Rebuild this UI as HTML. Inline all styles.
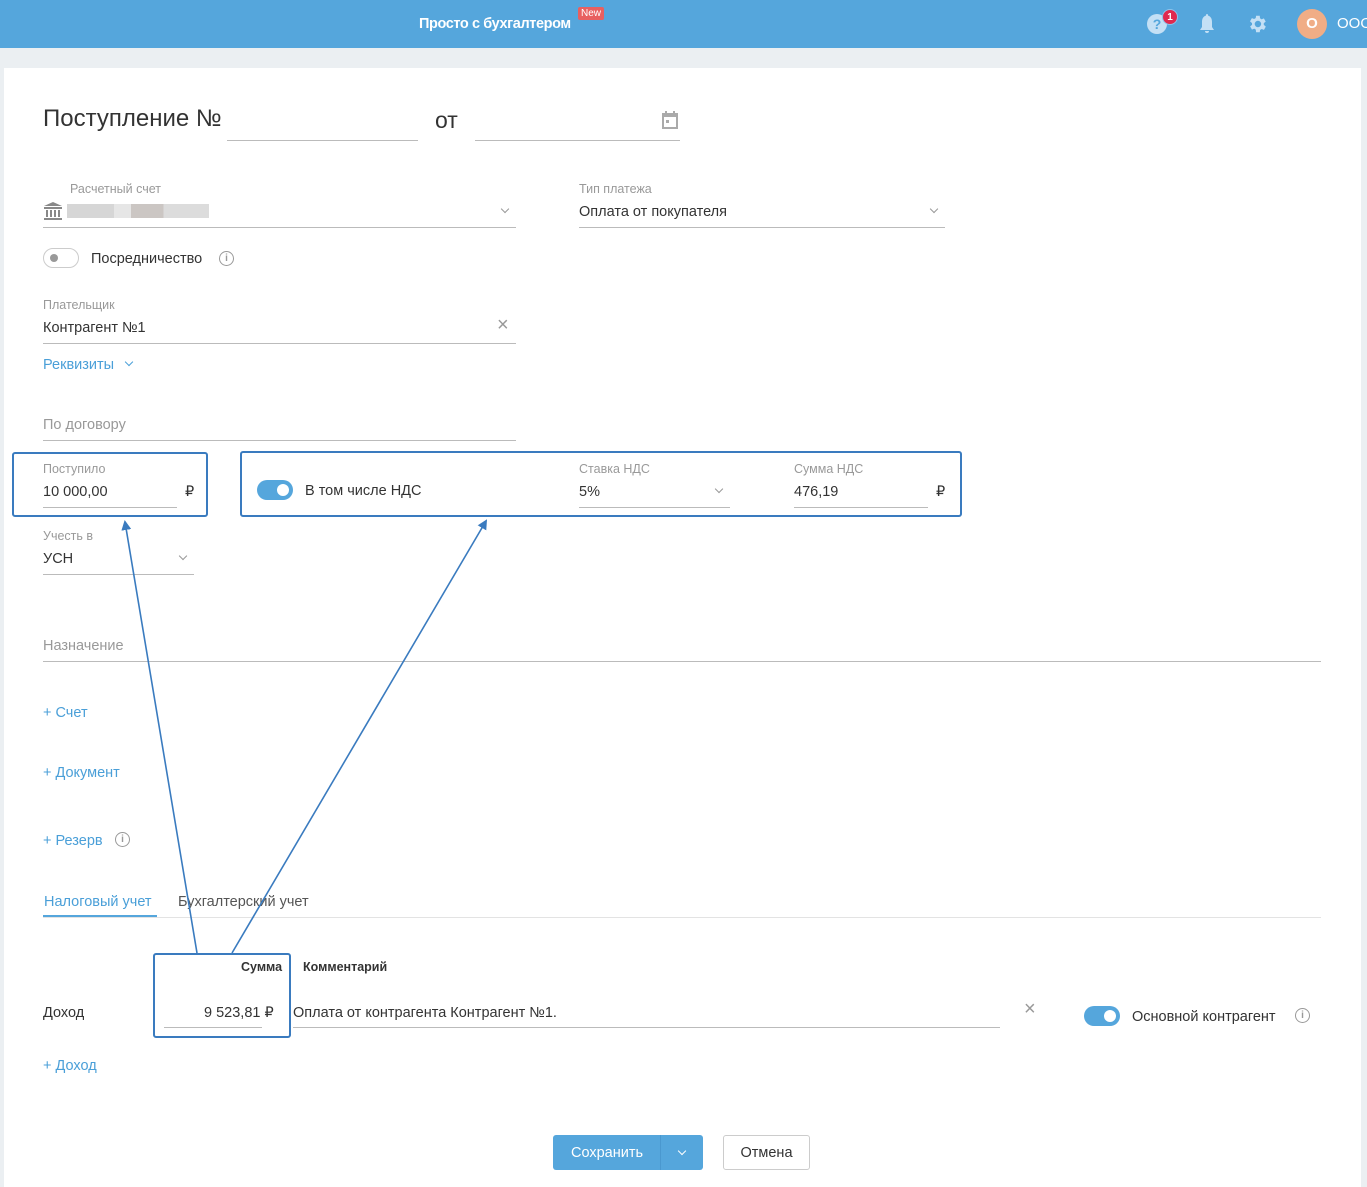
<!DOCTYPE html>
<html><head><meta charset="utf-8"><style>
*{box-sizing:border-box;margin:0;padding:0}
body{width:1367px;height:1187px;overflow:hidden;background:#ebeff2;font-family:"Liberation Sans",sans-serif;color:#333;position:relative}
.a{position:absolute;white-space:nowrap}
.top{position:absolute;left:0;top:0;width:1367px;height:48px;background:#55a6dc}
.card{position:absolute;left:4px;top:68px;width:1357px;height:1119px;background:#fff}
.lbl{font-size:12.5px;color:#999;margin-top:1px}
.val{font-size:14.5px;color:#333;margin-top:1px}
.ln{position:absolute;height:1px;background:#bbb}
.blue{color:#4a9fd8;font-size:14.5px;margin-top:1px}
.chev{position:absolute;width:6px;height:6px;border-right:1.3px solid #999;border-bottom:1.3px solid #999;transform:rotate(45deg)}
.info{position:absolute;width:15px;height:15px;border:1.3px solid #999;border-radius:50%;font-size:10px;color:#999;text-align:center;line-height:13px;font-weight:bold}
.box{position:absolute;border:2.5px solid #3a7bbf;border-radius:3px}
.tog{position:absolute;width:36px;height:20px;border-radius:10px;background:#55a6dc}
.tog:after{content:"";position:absolute;right:4px;top:4px;width:12px;height:12px;border-radius:50%;background:#fff}
</style></head><body>
<div class="top"></div>
<div class="a" style="left:419px;top:16px;color:#fff;font-size:14.5px;font-weight:bold;letter-spacing:-0.4px">Просто с бухгалтером</div>
<div class="a" style="left:578px;top:7px;background:#e86060;color:#fff;font-size:10px;padding:1px 3px;border-radius:2px">New</div>
<div class="a" style="left:1147px;top:14px;width:20px;height:20px;border-radius:50%;background:#c4e0f5;color:#55a6dc;font-weight:bold;font-size:14px;text-align:center;line-height:20px">?</div>
<div class="a" style="left:1162px;top:9px;width:16px;height:16px;border-radius:50%;background:#e0294f;color:#fff;font-size:10px;font-weight:bold;text-align:center;line-height:16px;border:1px solid #8fc3ea">1</div>
<svg class="a" style="left:1198px;top:13px" width="18" height="22" viewBox="0 0 18 22"><path d="M9 1c-1 0-1 1-1 1.5C5 3.5 4 6 4 9v5l-2 3h14l-2-3V9c0-3-1-5.5-4-6.5C10 2 10 1 9 1z M7 18a2 2 0 0 0 4 0z" fill="#c4e0f5"/></svg>
<svg class="a" style="left:1246px;top:13px" width="22" height="22" viewBox="0 0 24 24"><path fill="#c4e0f5" d="M19.4 13a7.5 7.5 0 0 0 0-2l2.1-1.6-2-3.5-2.5 1a7 7 0 0 0-1.7-1L15 3h-4l-.4 2.6a7 7 0 0 0-1.7 1l-2.5-1-2 3.5L6.6 11a7.5 7.5 0 0 0 0 2l-2.1 1.6 2 3.5 2.5-1a7 7 0 0 0 1.7 1L11 21h4l.4-2.6a7 7 0 0 0 1.7-1l2.5 1 2-3.5zM13 15.5a3.5 3.5 0 1 1 0-7 3.5 3.5 0 0 1 0 7z"/></svg>
<div class="a" style="left:1297px;top:9px;width:30px;height:30px;border-radius:50%;background:#f0ad86;color:#fff;font-weight:bold;font-size:15px;text-align:center;line-height:30px">О</div>
<div class="a" style="left:1337px;top:15px;color:#fff;font-size:15px">ООО</div>
<div class="card"></div>

<div class="a" style="left:43px;top:105px;font-size:24px;color:#333">Поступление №</div>
<div class="ln" style="left:227px;top:140px;width:191px"></div>
<div class="a" style="left:435px;top:107px;font-size:23px">от</div>
<div class="ln" style="left:475px;top:140px;width:205px"></div>
<svg class="a" style="left:661px;top:110px" width="18" height="20" viewBox="0 0 18 20"><rect x="1" y="3" width="16" height="16" fill="#aaa"/><rect x="3" y="7" width="12" height="10" fill="#fff"/><rect x="4" y="1" width="2" height="4" fill="#aaa"/><rect x="12" y="1" width="2" height="4" fill="#aaa"/><rect x="5" y="10" width="3" height="3" fill="#aaa"/></svg>

<div class="a lbl" style="left:70px;top:181px">Расчетный счет</div>
<svg class="a" style="left:43px;top:201px" width="20" height="20" viewBox="0 0 20 20"><path d="M10 1L1 5h18z M1 6h18v2H1z M3 9h2v7H3z M7 9h2v7H7z M11 9h2v7h-2z M15 9h2v7h-2z M1 17h18v2H1z" fill="#888"/></svg>
<div class="a" style="left:67px;top:204px;width:142px;height:14px;background:linear-gradient(90deg,#d6d6d6 0 33%,#e6e6e6 33% 45%,#cbc6c3 45% 68%,#dcdcdc 68%)"></div>
<div class="chev" style="left:502px;top:206px"></div>
<div class="ln" style="left:43px;top:227px;width:473px"></div>
<div class="a lbl" style="left:579px;top:181px">Тип платежа</div>
<div class="a val" style="left:579px;top:203px">Оплата от покупателя</div>
<div class="chev" style="left:931px;top:206px"></div>
<div class="ln" style="left:579px;top:227px;width:366px"></div>

<div class="a" style="left:43px;top:248px;width:36px;height:20px;border:1px solid #ccc;border-radius:10px"></div>
<div class="a" style="left:50px;top:254px;width:8px;height:8px;border-radius:50%;background:#999"></div>
<div class="a val" style="left:91px;top:250px">Посредничество</div>
<div class="info" style="left:219px;top:251px">i</div>

<div class="a lbl" style="left:43px;top:297px">Плательщик</div>
<div class="a val" style="left:43px;top:319px">Контрагент №1</div>
<div class="a" style="left:497px;top:314px;font-size:20px;color:#999">×</div>
<div class="ln" style="left:43px;top:343px;width:473px"></div>
<div class="a blue" style="left:43px;top:356px">Реквизиты</div>
<div class="chev" style="left:126px;top:359px;border-color:#4a9fd8"></div>

<div class="a" style="left:43px;top:417px;font-size:14.5px;color:#999">По договору</div>
<div class="ln" style="left:43px;top:440px;width:473px"></div>

<div class="box" style="left:12px;top:452px;width:196px;height:65px"></div>
<div class="a lbl" style="left:43px;top:461px">Поступило</div>
<div class="a val" style="left:43px;top:483px">10 000,00</div>
<div class="a val" style="left:185px;top:483px">₽</div>
<div class="ln" style="left:43px;top:507px;width:134px"></div>

<div class="box" style="left:240px;top:451px;width:722px;height:66px"></div>
<div class="tog" style="left:257px;top:480px"></div>
<div class="a val" style="left:305px;top:482px">В том числе НДС</div>
<div class="a lbl" style="left:579px;top:461px">Ставка НДС</div>
<div class="a val" style="left:579px;top:483px">5%</div>
<div class="chev" style="left:716px;top:486px"></div>
<div class="ln" style="left:579px;top:507px;width:151px"></div>
<div class="a lbl" style="left:794px;top:461px">Сумма НДС</div>
<div class="a val" style="left:794px;top:483px">476,19</div>
<div class="a val" style="left:936px;top:483px">₽</div>
<div class="ln" style="left:794px;top:507px;width:134px"></div>

<div class="a lbl" style="left:43px;top:528px">Учесть в</div>
<div class="a val" style="left:43px;top:550px">УСН</div>
<div class="chev" style="left:180px;top:553px"></div>
<div class="ln" style="left:43px;top:574px;width:151px"></div>

<div class="a" style="left:43px;top:638px;font-size:14.5px;color:#999">Назначение</div>
<div class="ln" style="left:43px;top:661px;width:1278px"></div>

<div class="a blue" style="left:43px;top:704px">+ Счет</div>
<div class="a blue" style="left:43px;top:764px">+ Документ</div>
<div class="a blue" style="left:43px;top:832px">+ Резерв</div>
<div class="info" style="left:115px;top:832px">i</div>

<div class="a" style="left:44px;top:894px;font-size:14.5px;color:#4a9fd8">Налоговый учет</div>
<div class="a" style="left:43px;top:915px;width:114px;height:2px;background:#55a6dc"></div>
<div class="a val" style="left:178px;top:893px;color:#555">Бухгалтерский учет</div>
<div class="ln" style="left:43px;top:917px;width:1278px;background:#e3e3e3"></div>

<div class="box" style="left:153px;top:953px;width:138px;height:85px"></div>
<div class="a" style="left:241px;top:960px;font-size:12.5px;font-weight:bold">Сумма</div>
<div class="a" style="left:303px;top:960px;font-size:12.5px;font-weight:bold">Комментарий</div>
<div class="a val" style="left:43px;top:1004px">Доход</div>
<div class="a val" style="left:204px;top:1004px">9 523,81 ₽</div>
<div class="ln" style="left:164px;top:1027px;width:98px"></div>
<div class="a val" style="left:293px;top:1004px">Оплата от контрагента Контрагент №1.</div>
<div class="ln" style="left:293px;top:1027px;width:707px"></div>
<div class="a" style="left:1024px;top:998px;font-size:20px;color:#999">×</div>
<div class="tog" style="left:1084px;top:1006px"></div>
<div class="a val" style="left:1132px;top:1008px">Основной контрагент</div>
<div class="info" style="left:1295px;top:1008px">i</div>
<div class="a blue" style="left:43px;top:1057px">+ Доход</div>

<div class="a" style="left:553px;top:1135px;width:150px;height:35px;background:#55a6dc;border-radius:3px"></div>
<div class="a" style="left:660px;top:1135px;width:1px;height:35px;background:#4a98cf"></div>
<div class="a" style="left:571px;top:1145px;color:#fff;font-size:14.5px">Сохранить</div>
<div class="chev" style="left:679px;top:1148px;border-color:#fff"></div>
<div class="a" style="left:723px;top:1135px;width:87px;height:35px;border:1px solid #ccc;border-radius:3px;text-align:center;line-height:35px;font-size:14.5px">Отмена</div>

<svg class="a" style="left:0;top:0" width="1367" height="1187">
<defs><marker id="m" markerWidth="10" markerHeight="10" refX="8" refY="5" orient="auto" markerUnits="userSpaceOnUse"><path d="M0 0L10 5L0 10z" fill="#3a7bbf"/></marker></defs>
<line x1="197" y1="953" x2="125" y2="522" stroke="#3a7bbf" stroke-width="1.6" marker-end="url(#m)"/>
<line x1="232" y1="953" x2="486" y2="521" stroke="#3a7bbf" stroke-width="1.6" marker-end="url(#m)"/>
</svg>
</body></html>
